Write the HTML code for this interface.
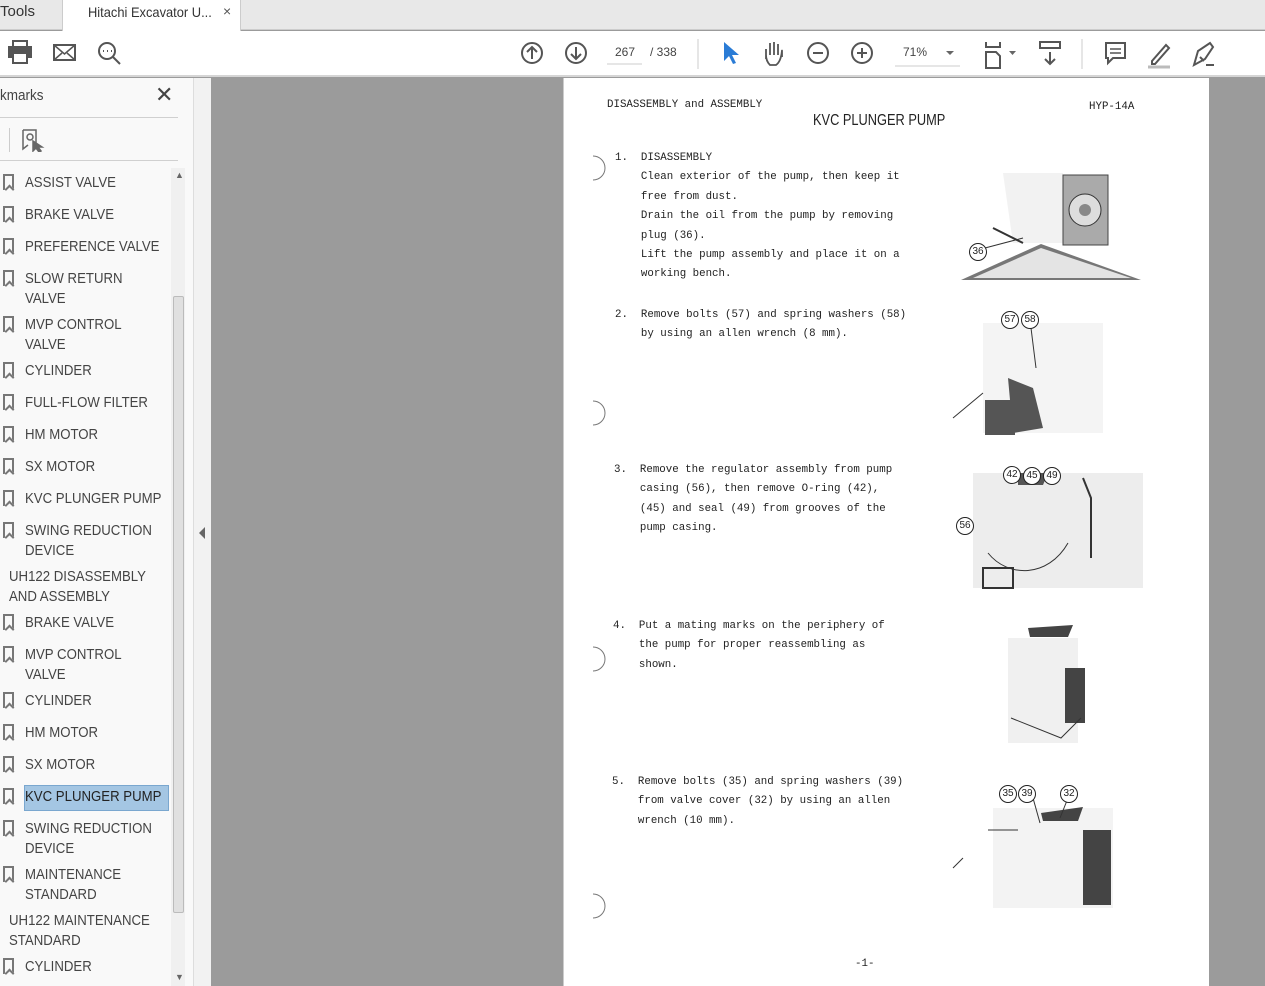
<!DOCTYPE html>
<html><head><meta charset="utf-8"><style>
*{margin:0;padding:0;box-sizing:border-box}
body{width:1265px;height:986px;overflow:hidden;position:relative;background:#9b9b9b;font-family:"Liberation Sans",sans-serif}
.a{position:absolute}
.bm{position:absolute;left:25px;font-size:15px;color:#444;line-height:20px;transform:scaleX(0.88);transform-origin:left top;white-space:nowrap}
.ic{position:absolute;left:3px;width:11px;height:16px;border:2px solid #777;border-bottom:none}
.ic:after{content:"";position:absolute;left:1px;bottom:-3px;width:5px;height:5px;border-left:2px solid #777;border-top:2px solid #777;transform:rotate(45deg);background:#f9f9f9}
.m{position:absolute;font-family:"Liberation Mono",monospace;font-size:11px;color:#222;line-height:19.4px;white-space:pre;transform:scaleX(0.98);transform-origin:left}
.c{position:absolute;width:18px;height:18px;border:1px solid #222;border-radius:50%;font-size:10px;text-align:center;line-height:16px;background:#fff;color:#222}
</style></head><body>
<div class="a" style="left:0;top:0;width:1265px;height:30px;background:#e8e8e8;border-bottom:1px solid #ccc"></div>
<div class="a" style="left:0;top:3px;font-size:15px;color:#333">Tools</div>
<div class="a" style="left:62px;top:0;width:179px;height:31px;background:#fff;border-left:1px solid #ccc;border-right:1px solid #ccc"></div>
<div class="a" style="left:88px;top:4px;font-size:14px;color:#333;transform:scaleX(0.92);transform-origin:left">Hitachi Excavator U...</div>
<div class="a" style="left:223px;top:3px;font-size:14px;color:#555">×</div>
<div class="a" style="left:0;top:31px;width:1265px;height:46px;background:#fff;border-bottom:2px solid #d5d5d5"></div>
<svg class="a" style="left:0;top:31px" width="1265" height="46" fill="none" stroke="#555" stroke-width="2">
<rect x="13" y="10" width="14" height="6"/><rect x="9" y="16" width="22" height="10" fill="#555"/><rect x="13" y="22" width="14" height="10" fill="#fff"/>
<rect x="54" y="14" width="21" height="15"/><path d="M54 14l10.5 9 10.5-9M54 29l8-7M75 29l-8-7" stroke-width="1.5"/>
<circle cx="107" cy="20" r="8"/><path d="M113 26l7 7"/><path d="M103 20h1M107 20h1M111 20h1"/>
<circle cx="532" cy="22" r="10"/><path d="M532 28V16M527 21l5-5 5 5"/>
<circle cx="576" cy="22" r="10"/><path d="M576 16v12M571 23l5 5 5-5"/>
<path d="M607 33h35" stroke="#ccc" stroke-width="1"/>
<path d="M698 8v30" stroke="#ccc" stroke-width="1"/>
<path d="M724 11l0 19 5-5 4 8 3-1-4-8 7 0z" fill="#2a7cd6" stroke="none"/>
<path d="M766 28v-10M770 24v-12M774 24v-13M778 24v-11M782 26v-6c0-3 0 10-6 14h-6c-3-3-4-6-4-10" stroke-width="1.8"/>
<circle cx="818" cy="22" r="10"/><path d="M813 22h10"/>
<circle cx="862" cy="22" r="10"/><path d="M857 22h10M862 17v10"/>
<path d="M895 35h65" stroke="#ccc" stroke-width="1"/>
<path d="M946 20h8l-4 4z" fill="#666" stroke="none"/>
<path d="M986 11v5h14v-5M986 37v-16h10l4 4v12z"/><path d="M1009 20h7l-3.5 4z" fill="#666" stroke="none"/>
<rect x="1040" y="11" width="20" height="6"/><path d="M1050 21v12M1045 28l5 5 5-5"/>
<path d="M1082 8v30" stroke="#ccc" stroke-width="1"/>
<path d="M1106 12h19v15h-12l-5 5v-5h-2z"/><path d="M1110 18h11M1110 22h11" stroke-width="1.5"/>
<path d="M1152 30l14-16 3 3-14 16h-3z"/><path d="M1148 36h22" stroke="#bbb" stroke-width="3"/>
<path d="M1194 34l4-14 12-8 3 4-8 12zM1200 26l4 4M1206 34h8"/>
</svg>
<div class="a" style="left:615px;top:45px;font-size:12px;color:#444">267</div>
<div class="a" style="left:650px;top:45px;font-size:12px;color:#444">/ 338</div>
<div class="a" style="left:903px;top:45px;font-size:12px;color:#444">71%</div>
<div class="a" style="left:0;top:78px;width:193px;height:908px;background:#f9f9f9"></div>
<div class="a" style="left:193px;top:78px;width:18px;height:908px;background:#f2f2f2;border-left:1px solid #ddd"></div>
<div class="a" style="left:199px;top:527px;width:0;height:0;border-top:6px solid transparent;border-bottom:6px solid transparent;border-right:6px solid #666"></div>
<div class="a" style="left:0;top:87px;font-size:15px;color:#444;transform:scaleX(0.9);transform-origin:left">kmarks</div>
<div class="a" style="left:155px;top:82px;font-size:22px;color:#444">✕</div>
<div class="a" style="left:0;top:117px;width:178px;height:1px;background:#d0d0d0"></div>
<div class="a" style="left:9px;top:128px;width:1px;height:24px;background:#ccc"></div>
<svg class="a" style="left:20px;top:128px" width="26" height="24" fill="none" stroke="#666" stroke-width="1.5"><path d="M3 2h13v13M3 2v19l5-4"/><circle cx="10" cy="9" r="3"/><path d="M13 13l0 10 3-3 3 4 2-1-3-4 4 0z" fill="#666"/></svg>
<div class="a" style="left:0;top:160px;width:178px;height:1px;background:#d0d0d0"></div>
<div class="a" style="left:171px;top:168px;width:14px;height:818px;background:#f0f0f0"></div>
<div class="a" style="left:173px;top:296px;width:11px;height:617px;background:#e0e0e0;border:1px solid #bbb;border-radius:2px"></div>
<div class="a" style="left:175px;top:170px;font-size:9px;color:#666">▲</div>
<div class="a" style="left:175px;top:972px;font-size:9px;color:#666">▼</div>
<div class="a" style="left:24px;top:785px;width:145px;height:26px;background:#a4c6e3;border:1px solid #7aa7cf"></div>
<div class="ic" style="top:174px"></div><div class="bm" style="top:173px">ASSIST VALVE</div>
<div class="ic" style="top:206px"></div><div class="bm" style="top:205px">BRAKE VALVE</div>
<div class="ic" style="top:238px"></div><div class="bm" style="top:237px">PREFERENCE VALVE</div>
<div class="ic" style="top:270px"></div><div class="bm" style="top:269px">SLOW RETURN<br>VALVE</div>
<div class="ic" style="top:316px"></div><div class="bm" style="top:315px">MVP CONTROL<br>VALVE</div>
<div class="ic" style="top:362px"></div><div class="bm" style="top:361px">CYLINDER</div>
<div class="ic" style="top:394px"></div><div class="bm" style="top:393px">FULL-FLOW FILTER</div>
<div class="ic" style="top:426px"></div><div class="bm" style="top:425px">HM MOTOR</div>
<div class="ic" style="top:458px"></div><div class="bm" style="top:457px">SX MOTOR</div>
<div class="ic" style="top:490px"></div><div class="bm" style="top:489px">KVC PLUNGER PUMP</div>
<div class="ic" style="top:522px"></div><div class="bm" style="top:521px">SWING REDUCTION<br>DEVICE</div>
<div class="bm" style="top:567px;left:9px">UH122 DISASSEMBLY<br>AND ASSEMBLY</div>
<div class="ic" style="top:614px"></div><div class="bm" style="top:613px">BRAKE VALVE</div>
<div class="ic" style="top:646px"></div><div class="bm" style="top:645px">MVP CONTROL<br>VALVE</div>
<div class="ic" style="top:692px"></div><div class="bm" style="top:691px">CYLINDER</div>
<div class="ic" style="top:724px"></div><div class="bm" style="top:723px">HM MOTOR</div>
<div class="ic" style="top:756px"></div><div class="bm" style="top:755px">SX MOTOR</div>
<div class="ic" style="top:788px"></div><div class="bm" style="top:787px;color:#222">KVC PLUNGER PUMP</div>
<div class="ic" style="top:820px"></div><div class="bm" style="top:819px">SWING REDUCTION<br>DEVICE</div>
<div class="ic" style="top:866px"></div><div class="bm" style="top:865px">MAINTENANCE<br>STANDARD</div>
<div class="bm" style="top:911px;left:9px">UH122 MAINTENANCE<br>STANDARD</div>
<div class="ic" style="top:958px"></div><div class="bm" style="top:957px">CYLINDER</div>
<div class="a" style="left:563px;top:78px;width:646px;height:908px;background:#fff;border-left:1px solid #ccc"></div>
<div class="m" style="left:607px;top:96px">DISASSEMBLY and ASSEMBLY</div>
<div class="m" style="left:1089px;top:98px">HYP-14A</div>
<div class="a" style="left:813px;top:112px;font-family:'Liberation Sans',sans-serif;font-size:16px;color:#222;transform:scaleX(0.8);transform-origin:left">KVC PLUNGER PUMP</div>
<div class="m" style="left:615px;top:149px">1.  DISASSEMBLY
    Clean exterior of the pump, then keep it
    free from dust.
    Drain the oil from the pump by removing
    plug (36).
    Lift the pump assembly and place it on a
    working bench.</div>
<div class="m" style="left:615px;top:306px">2.  Remove bolts (57) and spring washers (58)
    by using an allen wrench (8 mm).</div>
<div class="m" style="left:614px;top:461px">3.  Remove the regulator assembly from pump
    casing (56), then remove O-ring (42),
    (45) and seal (49) from grooves of the
    pump casing.</div>
<div class="m" style="left:613px;top:617px">4.  Put a mating marks on the periphery of
    the pump for proper reassembling as
    shown.</div>
<div class="m" style="left:612px;top:773px">5.  Remove bolts (35) and spring washers (39)
    from valve cover (32) by using an allen
    wrench (10 mm).</div>
<div class="m" style="left:855px;top:955px">-1-</div>
<svg class="a" style="left:563px;top:78px" width="646" height="908" fill="none" stroke="#777" stroke-width="1">
<path d="M30 78a12 12 0 0 1 0 24M30 323a12 12 0 0 1 0 24M30 569a12 12 0 0 1 0 24M30 816a12 12 0 0 1 0 24"/>
<path d="M398 202l80-36 100 36z" fill="#777" stroke="none"/><path d="M410 200l68-30 90 30z" fill="#e4e4e4" stroke="none"/>
<path d="M440 95h60v70h-50z" fill="#f2f2f2" stroke="none"/>
<rect x="500" y="97" width="45" height="70" fill="#aaa" stroke="#444"/><circle cx="522" cy="132" r="16" fill="#ddd" stroke="#333"/><circle cx="522" cy="132" r="6" fill="#888" stroke="none"/>
<path d="M430 150l30 15" stroke="#333" stroke-width="2"/><path d="M422 170l38-10" stroke="#333"/>
<path d="M420 245h120v110h-120z" fill="#f4f4f4" stroke="none"/>
<path d="M422 322h30v35h-30zM445 300l25 10 10 40-30 5z" fill="#555" stroke="none"/><path d="M390 340l30-25" stroke="#333"/><path d="M468 250l5 40" stroke="#333"/>
<path d="M410 395h170v115h-170z" fill="#ededed" stroke="none"/>
<path d="M420 490h30v20h-30zM520 400l8 20v60" stroke="#333" stroke-width="2"/><path d="M425 475c20 25 60 25 80-10" stroke="#333"/><path d="M455 395h30l-5 12h-25z" fill="#555" stroke="none"/>
<path d="M445 560h70v105h-70z" fill="#f0f0f0" stroke="none"/>
<path d="M465 550l45-3-5 12h-38z" fill="#444" stroke="none"/><path d="M502 590h20v55h-20z" fill="#444" stroke="none"/><path d="M448 640l50 20 20-20" stroke="#333"/>
<path d="M430 730h120v100h-120z" fill="#f3f3f3" stroke="none"/>
<path d="M478 735l42-6-5 14h-35z" fill="#444" stroke="none"/><path d="M520 752h28v75h-28z" fill="#444" stroke="none"/><path d="M425 752h30M390 790l10-10" stroke="#333"/>
<path d="M470 720l7 25" stroke="#333"/><path d="M505 720l-8 20" stroke="#333"/>
</svg>
<div class="c" style="left:969px;top:243px">36</div>
<div class="c" style="left:1001px;top:311px">57</div><div class="c" style="left:1021px;top:311px">58</div>
<div class="c" style="left:1003px;top:466px">42</div><div class="c" style="left:1023px;top:467px">45</div><div class="c" style="left:1043px;top:467px">49</div>
<div class="c" style="left:956px;top:517px">56</div>
<div class="c" style="left:999px;top:785px">35</div><div class="c" style="left:1018px;top:785px">39</div><div class="c" style="left:1060px;top:785px">32</div>
</body></html>
